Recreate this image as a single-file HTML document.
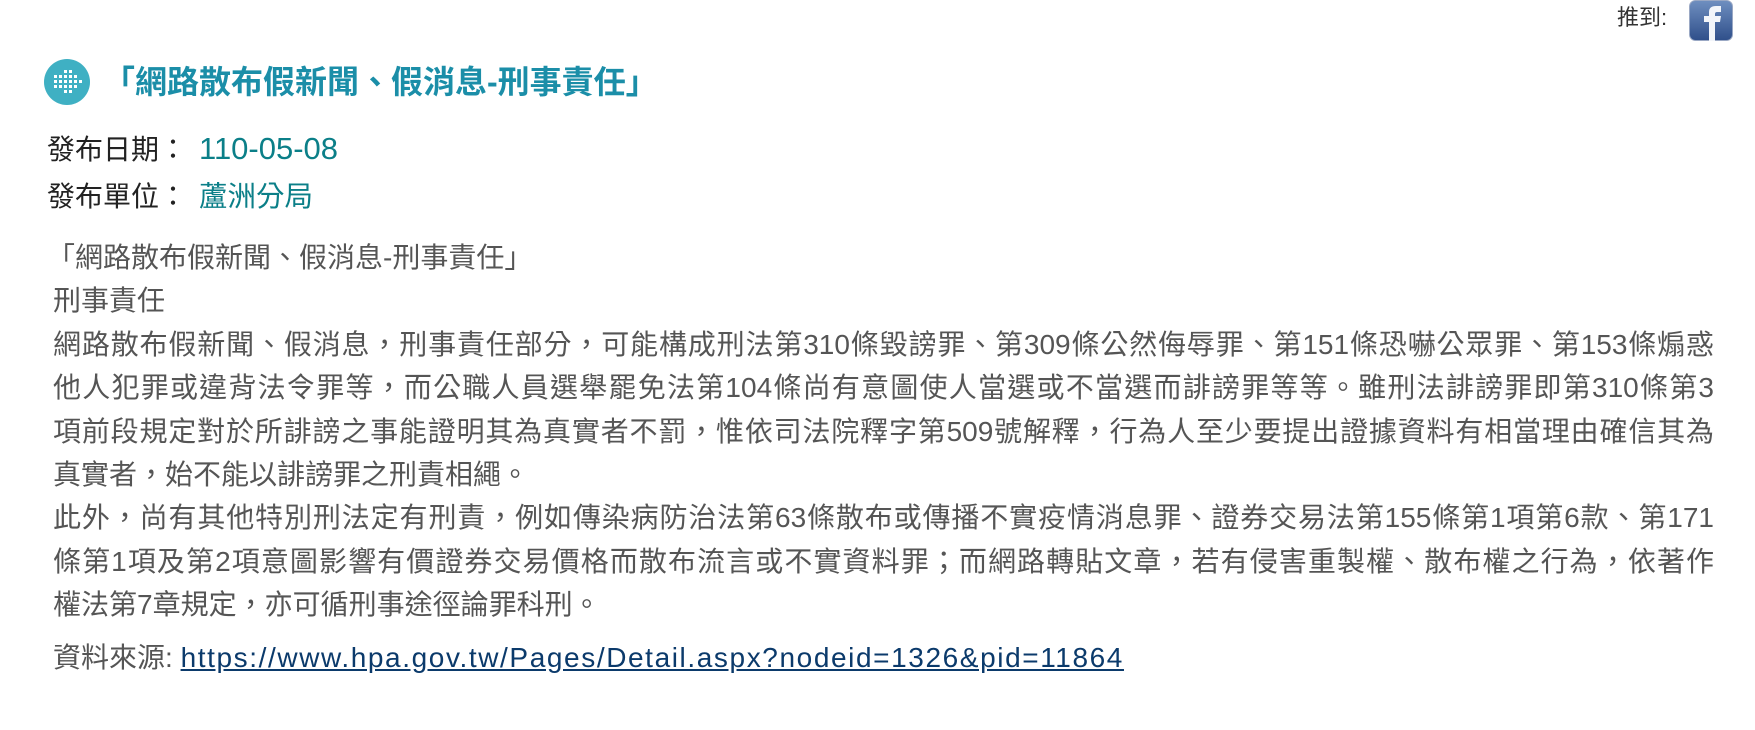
<!DOCTYPE html>
<html><head><meta charset="utf-8"><style>
html,body{margin:0;padding:0;background:#fff;width:1755px;height:730px;overflow:hidden;}
body{position:relative;font-family:"Liberation Sans","Noto Sans CJK TC",sans-serif;}
.a{position:absolute;white-space:nowrap;}
.l{position:absolute;left:53px;width:1661px;height:44px;line-height:44px;font-size:28px;color:#555;white-space:nowrap;}
.j{text-align:justify;text-align-last:justify;}
</style></head><body>
<div class="a" style="left:1617px;top:4px;font-size:22px;line-height:28px;color:#333;">推到:</div>
<svg class="a" style="left:1689px;top:0px" width="44" height="41" viewBox="0 0 44 41">
<defs><linearGradient id="g" x1="0" y1="0" x2="0" y2="1"><stop offset="0" stop-color="#6f8fc0"/><stop offset="1" stop-color="#2f4f8a"/></linearGradient></defs>
<rect x="0.5" y="0.5" width="43" height="40" rx="6" fill="url(#g)" stroke="#9aa8c4"/>
<path d="M20 41 V22 H15 V16 H20 V12 Q20 6 27 6 H32 V12 H28 Q26 12 26 14 V16 H32 L31 22 H26 V41 Z" fill="#f2f5fa"/>
</svg>
<svg class="a" style="left:44px;top:59px" width="46" height="46" viewBox="0 0 46 46">
<circle cx="23" cy="23" r="23" fill="#3fb0c3"/>
<g fill="#fff">
<rect x="10" y="16" width="3" height="3"/><rect x="10" y="21" width="3" height="3"/><rect x="10" y="26" width="3" height="3"/>
<rect x="15" y="16" width="3" height="3"/><rect x="15" y="21" width="3" height="3"/><rect x="15" y="26" width="3" height="3"/>
<rect x="20" y="11" width="3" height="3"/><rect x="20" y="16" width="3" height="3"/><rect x="20" y="21" width="3" height="3"/><rect x="20" y="26" width="3" height="3"/><rect x="20" y="31" width="3" height="3"/>
<rect x="25" y="11" width="3" height="3"/><rect x="25" y="16" width="3" height="3"/><rect x="25" y="21" width="3" height="3"/><rect x="25" y="26" width="3" height="3"/><rect x="25" y="31" width="3" height="3"/>
<rect x="30" y="16" width="3" height="3"/><rect x="30" y="21" width="3" height="3"/><rect x="30" y="26" width="3" height="3"/>
<rect x="35" y="21" width="3" height="3"/>
</g></svg>
<div class="a" style="left:103px;top:61px;font-size:32px;line-height:42px;font-weight:bold;color:#1b8ea8;">「網路散布假新聞、假消息-刑事責任」</div>
<div class="a" style="left:47px;top:130px;font-size:28px;line-height:40px;color:#222;">發布日期：</div>
<div class="a" style="left:199px;top:129px;font-size:31px;line-height:40px;color:#0b7f88;">110-05-08</div>
<div class="a" style="left:47px;top:177px;font-size:28px;line-height:40px;color:#222;">發布單位：</div>
<div class="a" style="left:199px;top:177px;font-size:28.5px;line-height:40px;color:#0b7f88;">蘆洲分局</div>

<div class="l" style="top:236px;left:47px">「網路散布假新聞、假消息-刑事責任」</div>
<div class="l" style="top:279px">刑事責任</div>
<div class="l j" style="top:323px">網路散布假新聞、假消息，刑事責任部分，可能構成刑法第310條毀謗罪、第309條公然侮辱罪、第151條恐嚇公眾罪、第153條煽惑</div>
<div class="l j" style="top:366px">他人犯罪或違背法令罪等，而公職人員選舉罷免法第104條尚有意圖使人當選或不當選而誹謗罪等等。雖刑法誹謗罪即第310條第3</div>
<div class="l j" style="top:410px">項前段規定對於所誹謗之事能證明其為真實者不罰，惟依司法院釋字第509號解釋，行為人至少要提出證據資料有相當理由確信其為</div>
<div class="l" style="top:453px">真實者，始不能以誹謗罪之刑責相繩。</div>
<div class="l j" style="top:496px">此外，尚有其他特別刑法定有刑責，例如傳染病防治法第63條散布或傳播不實疫情消息罪、證券交易法第155條第1項第6款、第171</div>
<div class="l j" style="top:540px">條第1項及第2項意圖影響有價證券交易價格而散布流言或不實資料罪；而網路轉貼文章，若有侵害重製權、散布權之行為，依著作</div>
<div class="l" style="top:583px">權法第7章規定，亦可循刑事途徑論罪科刑。</div>
<div class="l" style="top:636px">資料來源: <span style="color:#0b3a6b;text-decoration:underline;letter-spacing:1.6px;">https://www.hpa.gov.tw/Pages/Detail.aspx?nodeid=1326&amp;pid=11864</span></div>
</body></html>
